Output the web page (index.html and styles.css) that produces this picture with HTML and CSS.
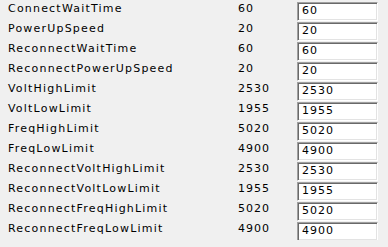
FILE: index.html
```html
<!DOCTYPE html>
<html>
<head>
<meta charset="utf-8">
<link rel="stylesheet" href="styles.css">
</head>
<body>
<div class="grid">
  <div class="label">ConnectWaitTime</div><div class="value">60</div><div class="cell"><input class="field" value="60"></div>
  <div class="label">PowerUpSpeed</div><div class="value">20</div><div class="cell"><input class="field" value="20"></div>
  <div class="label">ReconnectWaitTime</div><div class="value">60</div><div class="cell"><input class="field" value="60"></div>
  <div class="label">ReconnectPowerUpSpeed</div><div class="value">20</div><div class="cell"><input class="field" value="20"></div>
  <div class="label">VoltHighLimit</div><div class="value">2530</div><div class="cell"><input class="field" value="2530"></div>
  <div class="label">VoltLowLimit</div><div class="value">1955</div><div class="cell"><input class="field" value="1955"></div>
  <div class="label">FreqHighLimit</div><div class="value">5020</div><div class="cell"><input class="field" value="5020"></div>
  <div class="label">FreqLowLimit</div><div class="value">4900</div><div class="cell"><input class="field" value="4900"></div>
  <div class="label">ReconnectVoltHighLimit</div><div class="value">2530</div><div class="cell"><input class="field" value="2530"></div>
  <div class="label">ReconnectVoltLowLimit</div><div class="value">1955</div><div class="cell"><input class="field" value="1955"></div>
  <div class="label">ReconnectFreqHighLimit</div><div class="value">5020</div><div class="cell"><input class="field" value="5020"></div>
  <div class="label">ReconnectFreqLowLimit</div><div class="value">4900</div><div class="cell"><input class="field" value="4900"></div>
</div>
</body>
</html>
```
FILE: styles.css
```css
html, body {
  margin: 0;
  padding: 0;
  background: #f0f0f0;
}
body {
  padding: 0 8px;
  font-family: "DejaVu Sans", Verdana, sans-serif;
  font-size: 11px;
  color: #000;
}
.grid {
  display: grid;
  grid-template-columns: 230px 59px 81px;
  grid-auto-rows: 20px;
}
.label, .value {
  line-height: 13px;
  padding-top: 2px;
  white-space: nowrap;
}
.label {
  letter-spacing: 1.2px;
}
.value {
  letter-spacing: 1px;
}
.cell {
  padding-top: 2px;
}
.field {
  display: block;
  box-sizing: border-box;
  width: 81px;
  height: 19px;
  margin: 0;
  padding: 0 0 3px 4px;
  line-height: 12px;
  font-family: "DejaVu Sans", Verdana, sans-serif;
  font-size: 11px;
  letter-spacing: 1px;
  color: #000;
  background: #fff;
  border-style: solid;
  border-width: 1px;
  border-color: #a0a0a0 #ffffff #ffffff #a0a0a0;
  box-shadow: inset 1px 1px 0 #696969, inset -1px -1px 0 #e3e3e3;
  outline: none;
}
```
